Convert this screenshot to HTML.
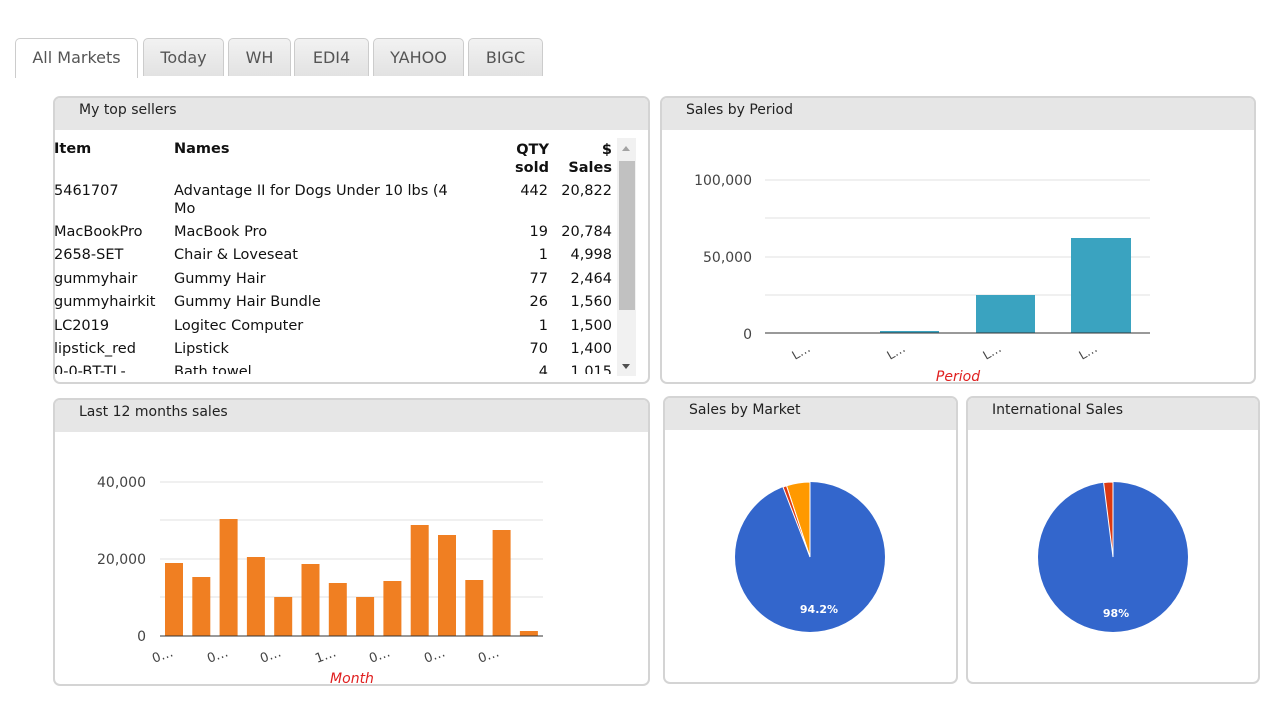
<!DOCTYPE html>
<html><head><style>
body{margin:0;width:1280px;height:720px;background:#fff;font-family:"DejaVu Sans","Liberation Sans",sans-serif;position:relative;overflow:hidden;color:#222}
.tab{position:absolute;top:38px;height:37px;border:1px solid #ccc;border-bottom:none;border-radius:5px 5px 0 0;background:linear-gradient(#f2f2f2,#e2e2e2);color:#555;text-align:center;line-height:38px;font-family:"DejaVu Sans",sans-serif;font-size:16px}
.tab.a{background:#fff;height:39px}
.p{position:absolute;border:2px solid #d4d4d4;border-radius:7px;overflow:hidden;background:#fff}
.h{height:32px;background:#e6e6e6;font-size:14px;line-height:24px;padding-left:24px;color:#222}
.t{position:absolute;font-size:14.5px;white-space:nowrap;color:#111}
.b{font-weight:bold}
svg text{font-family:"DejaVu Sans","Liberation Sans",sans-serif}
</style></head><body>
<div class="tab a" style="left:15px;width:121px">All Markets</div>
<div class="tab" style="left:143px;width:79px">Today</div>
<div class="tab" style="left:228px;width:61px">WH</div>
<div class="tab" style="left:294px;width:73px">EDI4</div>
<div class="tab" style="left:373px;width:89px">YAHOO</div>
<div class="tab" style="left:468px;width:73px">BIGC</div>

<div class="p" style="left:53px;top:96px;width:593px;height:284px"><div class="h">My top sellers</div>
<div style="position:absolute;left:562px;top:40px;width:19px;height:238px;background:#f1f1f1"><div style="position:absolute;left:2px;top:23px;width:16px;height:149px;background:#c1c1c1"></div>
<div style="position:absolute;left:5px;top:8px;border:4px solid transparent;border-bottom:5px solid #a3a3a3;border-top:none"></div>
<div style="position:absolute;left:5px;top:226px;border:4px solid transparent;border-top:5px solid #505050;border-bottom:none"></div></div>
</div>
<div class="t b" style="left:54px;top:141px">Item</div>
<div class="t b" style="left:174px;top:141px">Names</div>
<div class="t b" style="left:515px;top:141px;text-align:right;line-height:18px">QTY<br>sold</div>
<div class="t b" style="left:566px;top:141px;width:46px;text-align:right;line-height:18px">$<br>Sales</div>
<div id="rows"></div>
<script>
var r=[["5461707","Advantage II for Dogs Under 10 lbs (4","442","20,822",183],["","Mo","","",201],["MacBookPro","MacBook Pro","19","20,784",224],["2658-SET","Chair &amp; Loveseat","1","4,998",247],["gummyhair","Gummy Hair","77","2,464",271],["gummyhairkit","Gummy Hair Bundle","26","1,560",294],["LC2019","Logitec Computer","1","1,500",318],["lipstick_red","Lipstick","70","1,400",341],["0-0-BT-TL-","Bath towel","4","1,015",364]];
var h="";r.forEach(function(a){var clip=a[4]>350?"height:10px;overflow:hidden;":"";h+='<div class="t" style="'+clip+'left:54px;top:'+a[4]+'px">'+a[0]+'</div><div class="t" style="'+clip+'left:174px;top:'+a[4]+'px">'+a[1]+'</div><div class="t" style="'+clip+'left:500px;width:48px;text-align:right;top:'+a[4]+'px">'+a[2]+'</div><div class="t" style="'+clip+'left:552px;width:60px;text-align:right;top:'+a[4]+'px">'+a[3]+'</div>'});
document.getElementById("rows").innerHTML=h;
</script>

<div class="p" style="left:660px;top:96px;width:592px;height:284px"><div class="h">Sales by Period</div></div>
<svg style="position:absolute;left:0;top:0" width="1280" height="720">
<g stroke="#e0e0e0"><line x1="765" x2="1150" y1="180" y2="180"/><line x1="765" x2="1150" y1="218" y2="218"/><line x1="765" x2="1150" y1="257" y2="257"/><line x1="765" x2="1150" y1="295" y2="295"/></g>
<rect x="880" y="331" width="59" height="2" fill="#3aa3c0"/><rect x="976" y="295" width="59" height="38" fill="#3aa3c0"/><rect x="1071" y="238" width="60" height="95" fill="#3aa3c0"/>
<line x1="765" x2="1150" y1="333" y2="333" stroke="#333"/>
<g font-size="14" fill="#444" text-anchor="end"><text x="752" y="185">100,000</text><text x="752" y="262">50,000</text><text x="752" y="339">0</text></g>
<g font-size="12" fill="#444"><text transform="translate(795,360) rotate(-30)">L…</text><text transform="translate(890,360) rotate(-30)">L…</text><text transform="translate(986,360) rotate(-30)">L…</text><text transform="translate(1082,360) rotate(-30)">L…</text></g>
<text x="958" y="381" font-size="14" fill="#e02020" font-style="italic" text-anchor="middle">Period</text>
</svg>

<div class="p" style="left:53px;top:398px;width:593px;height:284px"><div class="h">Last 12 months sales</div></div>
<svg style="position:absolute;left:0;top:0" width="1280" height="720">
<g stroke="#e0e0e0"><line x1="160" x2="543" y1="482" y2="482"/><line x1="160" x2="543" y1="520" y2="520"/><line x1="160" x2="543" y1="559" y2="559"/><line x1="160" x2="543" y1="597" y2="597"/></g>
<g fill="#f07f22" id="mb"></g>
<line x1="160" x2="543" y1="636" y2="636" stroke="#333"/>
<g font-size="14" fill="#444" text-anchor="end"><text x="146" y="487">40,000</text><text x="146" y="564">20,000</text><text x="146" y="641">0</text></g>
<g font-size="13" fill="#444"><text transform="translate(154,663) rotate(-20)">0…</text><text transform="translate(209,663) rotate(-20)">0…</text><text transform="translate(262,663) rotate(-20)">0…</text><text transform="translate(317,663) rotate(-20)">1…</text><text transform="translate(371,663) rotate(-20)">0…</text><text transform="translate(426,663) rotate(-20)">0…</text><text transform="translate(480,663) rotate(-20)">0…</text></g>
<text x="352" y="683" font-size="14" fill="#e02020" font-style="italic" text-anchor="middle">Month</text>
</svg>
<script>
var tops=[563,577,519,557,597,564,583,597,581,525,535,580,530,631],s="";
tops.forEach(function(t,i){var c=174+i*27.3;s+='<rect x="'+(c-9)+'" y="'+t+'" width="18" height="'+(636-t)+'"/>'});
document.getElementById("mb").innerHTML=s;
</script>

<div class="p" style="left:663px;top:396px;width:291px;height:284px"><div class="h">Sales by Market</div></div>
<div class="p" style="left:966px;top:396px;width:290px;height:284px"><div class="h">International Sales</div></div>
<svg style="position:absolute;left:0;top:0" width="1280" height="720">
<circle cx="810" cy="557" r="75" fill="#3366cc"/>
<path d="M810 557 L810 482 A75 75 0 0 0 786.5 485.8 Z" fill="#ff9900" stroke="#fff" stroke-width="1"/>
<path d="M810 557 L786.5 485.8 A75 75 0 0 0 783 487 Z" fill="#dc3912" stroke="#fff" stroke-width="1"/>
<text x="819" y="613" font-size="11" fill="#fff" text-anchor="middle" font-weight="bold">94.2%</text>
<circle cx="1113" cy="557" r="75" fill="#3366cc"/>
<path d="M1113 557 L1113 482 A75 75 0 0 0 1103.6 482.6 Z" fill="#dc3912" stroke="#fff" stroke-width="1"/>
<text x="1116" y="617" font-size="11" fill="#fff" text-anchor="middle" font-weight="bold">98%</text>
</svg>
</body></html>
